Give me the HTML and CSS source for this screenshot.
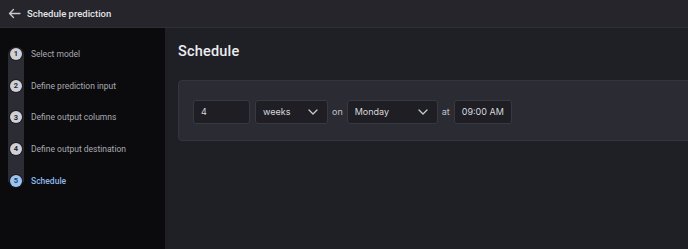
FILE: index.html
```html
<!DOCTYPE html>
<html lang="en">
<head>
    <meta charset="UTF-8">
    <title>Schedule prediction</title>
    <link rel="stylesheet" href="styles.css">
</head>
<body>
    <header class="topbar">
        <svg class="back" width="13" height="11" viewBox="0 0 13 11">
            <path d="M12 5.5H1.5M5.5 1.5L1.5 5.5l4 4" fill="none" stroke="#c9c9d0" stroke-width="1.3" stroke-linecap="round" stroke-linejoin="round"/>
        </svg>
        <span class="title">Schedule prediction</span>
    </header>

    <div class="layout">
        <aside class="sidebar">
            <div class="steps">
                <div class="track"></div>
                <div class="step"><span class="num">1</span><span class="label">Select model</span></div>
                <div class="step"><span class="num">2</span><span class="label">Define prediction input</span></div>
                <div class="step"><span class="num">3</span><span class="label">Define output columns</span></div>
                <div class="step"><span class="num">4</span><span class="label">Define output destination</span></div>
                <div class="step active"><span class="num">5</span><span class="label">Schedule</span></div>
            </div>
        </aside>

        <main class="content">
            <h1>Schedule</h1>
            <div class="panel">
                <div class="field num-field">4</div>
                <div class="field select unit">weeks
                    <svg class="chev" width="10" height="6" viewBox="0 0 10 6"><path d="M1 1l4 4 4-4" fill="none" stroke="#c9c9d0" stroke-width="1.3" stroke-linecap="round" stroke-linejoin="round"/></svg>
                </div>
                <span class="word">on</span>
                <div class="field select day">Monday
                    <svg class="chev" width="10" height="6" viewBox="0 0 10 6"><path d="M1 1l4 4 4-4" fill="none" stroke="#c9c9d0" stroke-width="1.3" stroke-linecap="round" stroke-linejoin="round"/></svg>
                </div>
                <span class="word">at</span>
                <div class="field time">09:00 AM</div>
            </div>
        </main>
    </div>
</body>
</html>
```

FILE: styles.css
```css
html, body {
    margin: 0;
    padding: 0;
    height: 100%;
}
body {
    font-family: Roboto, "Noto Sans", sans-serif;
    background-color: #1f1f26;
    color: #e6e6ea;
    overflow: hidden;
}
.topbar {
    height: 28px;
    background-color: #25252b;
    border-bottom: 1px solid #2e2e35;
    display: flex;
    align-items: center;
    padding-left: 8px;
    box-sizing: border-box;
}
.back {
    margin-right: 6px;
}
.title {
    font-size: 9.5px;
    font-weight: 500;
    color: #e4e4e8;
}
.layout {
    display: flex;
    height: calc(100% - 28px);
}
.sidebar {
    width: 165px;
    background-color: #0b0b0e;
    flex-shrink: 0;
}
.steps {
    position: relative;
    padding-top: 10px;
}
.track {
    position: absolute;
    left: 8px;
    top: 19px;
    width: 16px;
    height: 135px;
    background-color: #2c2c35;
    border-radius: 8px 8px 0 0;
}
.step {
    position: relative;
    display: flex;
    align-items: center;
    height: 31.7px;
    padding-left: 10px;
}
.num {
    width: 12px;
    height: 12px;
    border-radius: 50%;
    background-color: #cfcfd6;
    color: #2a2a32;
    font-size: 7.5px;
    font-weight: 700;
    display: flex;
    align-items: center;
    justify-content: center;
    box-shadow: 0 0 0 1px #1c1c22;
}
.label {
    margin-left: 9px;
    font-size: 8.5px;
    color: #a9a9b0;
}
.step.active .num {
    background-color: #9cc4f2;
    color: #1d3f6a;
}
.step.active .label {
    color: #8fb8ec;
    font-weight: 500;
}
.content {
    flex: 1;
    padding-left: 13px;
    min-width: 0;
}
.content h1 {
    margin: 15px 0 0 0;
    font-size: 14.5px;
    font-weight: 500;
    color: #ececf0;
    letter-spacing: 0.2px;
}
.panel {
    margin-top: 20px;
    margin-right: -6px;
    height: 61px;
    box-sizing: border-box;
    background-color: #2b2b33;
    border: 1px solid #35353e;
    border-radius: 4px;
    display: flex;
    align-items: center;
    padding-left: 14px;
    padding-top: 2px;
}
.field {
    height: 24px;
    box-sizing: border-box;
    background-color: #1e1e24;
    border: 1px solid #383841;
    border-radius: 3px;
    display: flex;
    align-items: center;
    padding-left: 7px;
    font-family: Inter, Roboto, sans-serif;
    font-size: 9px;
    color: #d8d8de;
}
.num-field {
    width: 57px;
}
.select {
    justify-content: space-between;
    padding-right: 9px;
}
.unit {
    width: 73px;
    margin-left: 5px;
}
.day {
    width: 91px;
}
.time {
    width: 58px;
}
.word {
    font-family: Inter, Roboto, sans-serif;
    font-size: 9px;
    color: #c4c4ca;
    margin: 0 4px;
}
```
